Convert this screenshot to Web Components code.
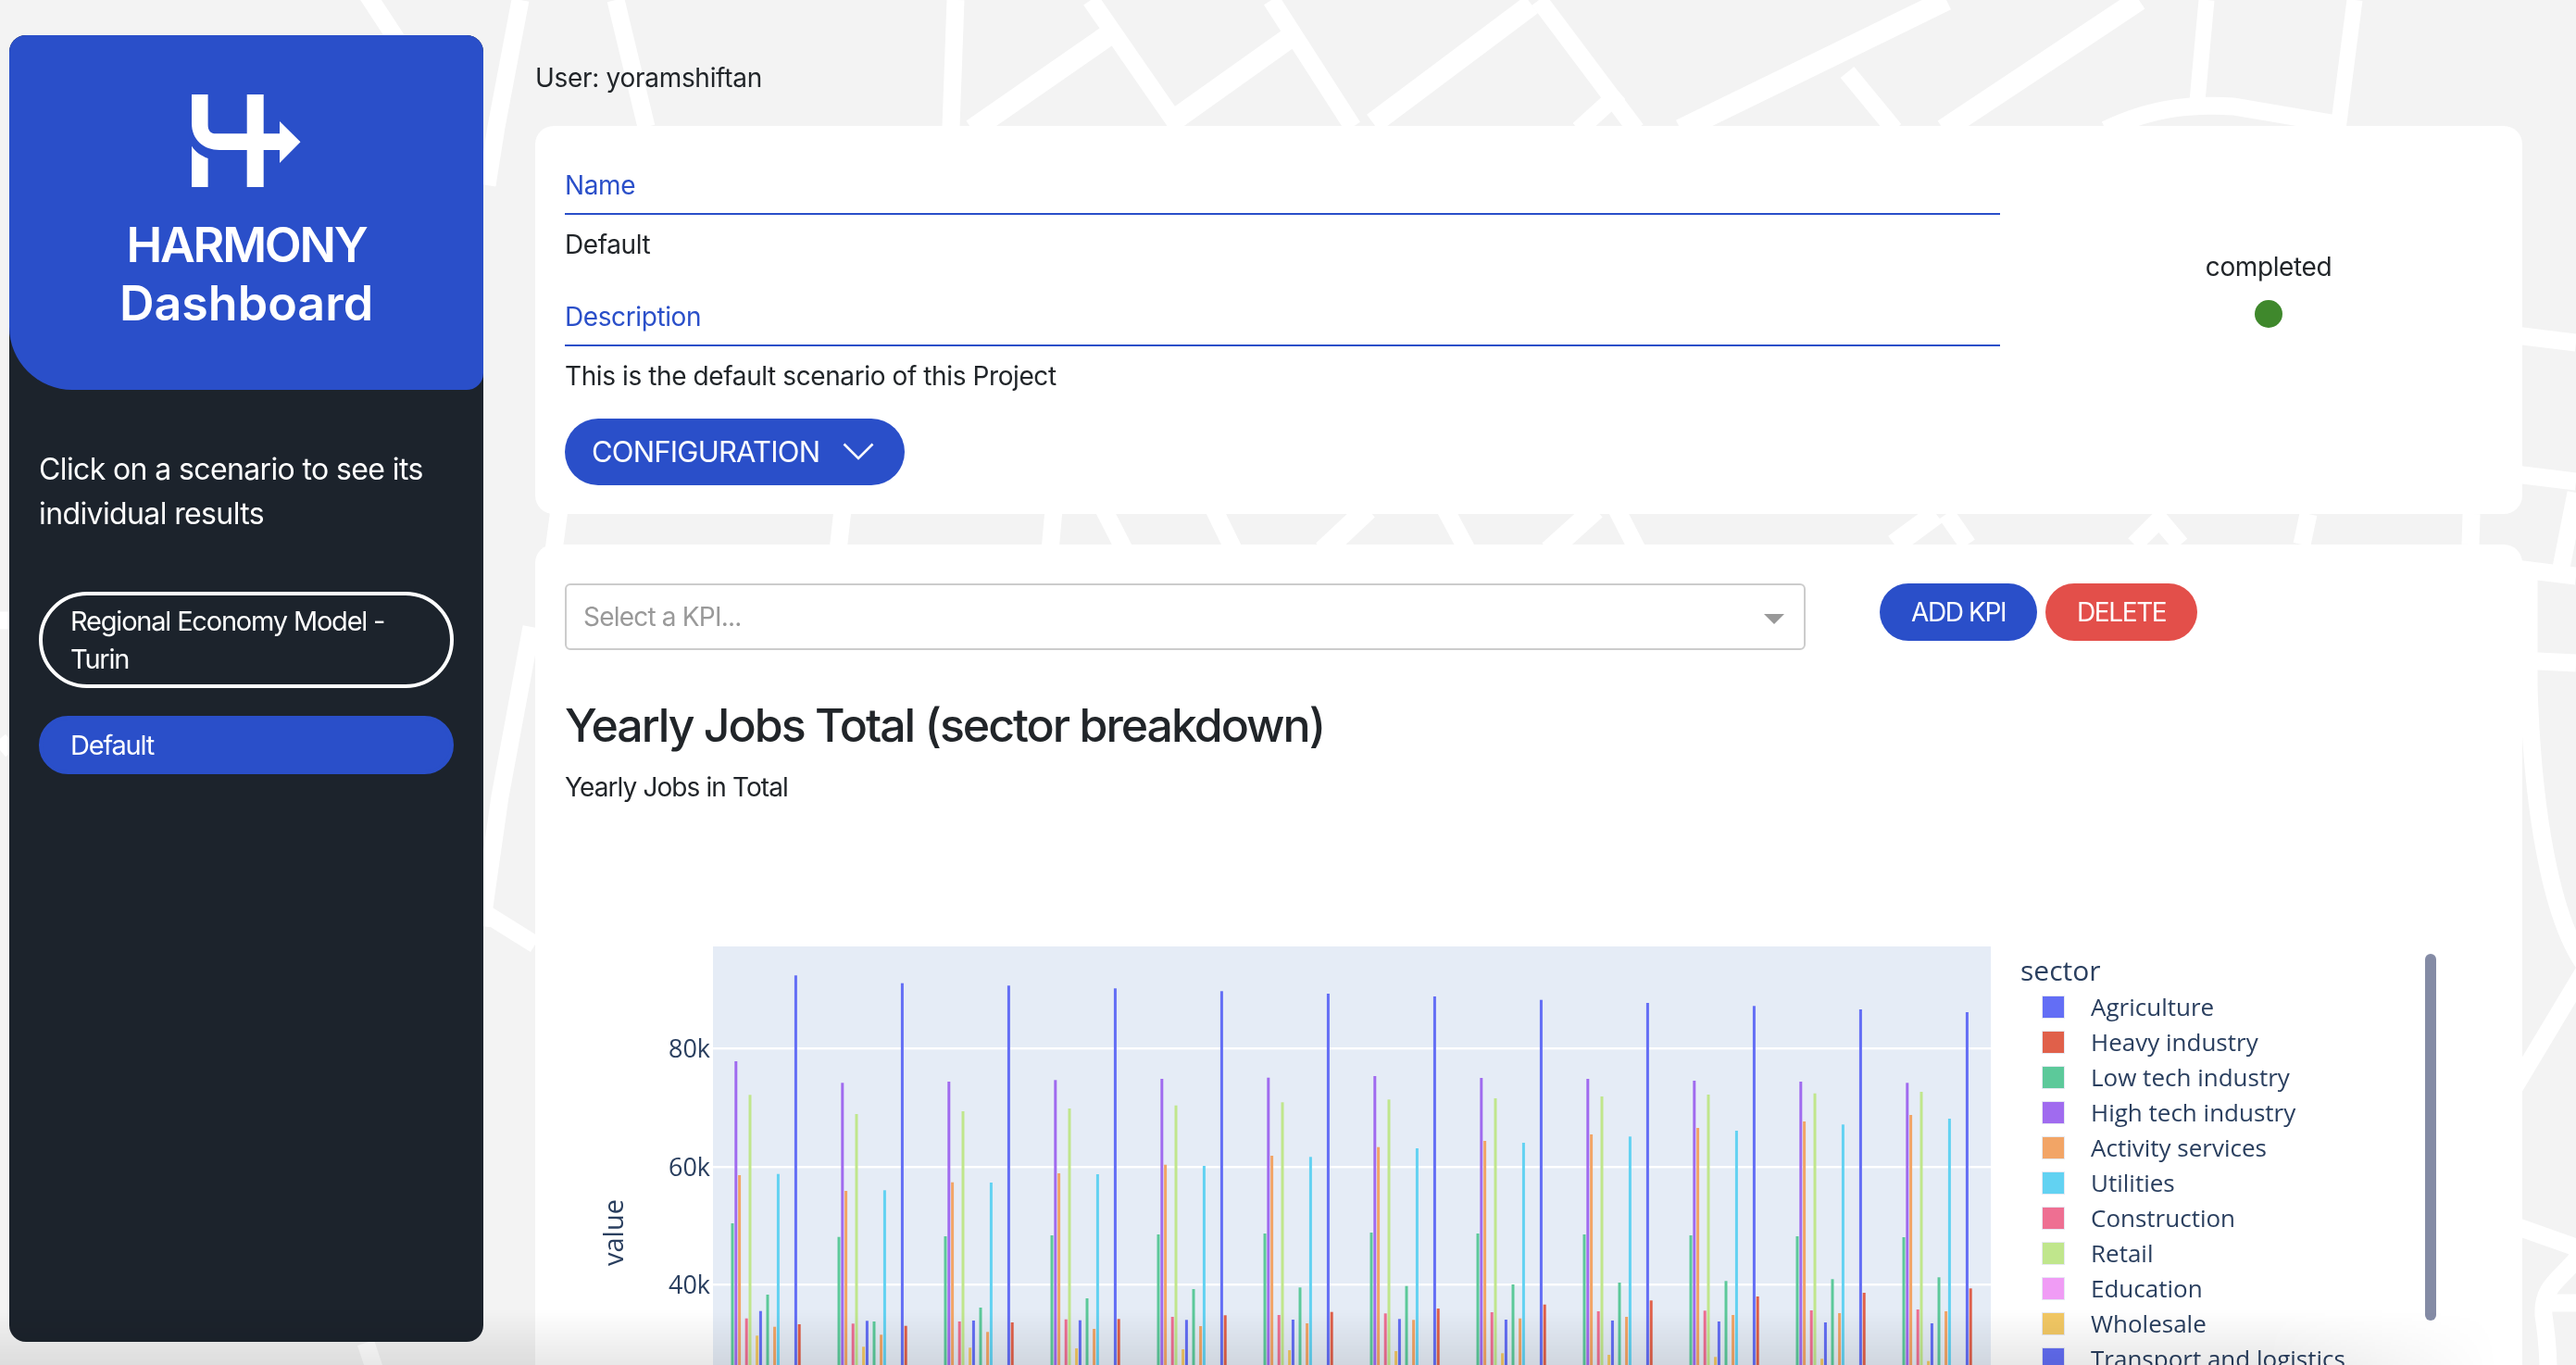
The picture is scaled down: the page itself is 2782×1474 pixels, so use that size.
<!DOCTYPE html>
<html lang="en">
<head>
<meta charset="utf-8">
<title>HARMONY Dashboard</title>
<style>
  html, body { margin: 0; height: 100%; overflow: hidden; background: #f3f3f3; }
  body { font-family: Inter, "Liberation Sans", sans-serif; color: #212529; }
</style>
</head>
<body>
<h-roads></h-roads>
<h-app>
  <h-sidebar slot="sidebar">
    <h-pill outline>Regional Economy Model - Turin</h-pill>
    <h-pill active>Default</h-pill>
  </h-sidebar>
  <h-user>User: yoramshiftan</h-user>
  <h-scenario-card>
    <h-field label="Name">Default</h-field>
    <h-field label="Description">This is the default scenario of this Project</h-field>
    <h-button slot="action" chevron size="large">CONFIGURATION</h-button>
    <h-status slot="status">completed</h-status>
  </h-scenario-card>
  <h-kpi-card>
    <h-select slot="toolbar" placeholder="Select a KPI..."></h-select>
    <h-button slot="toolbar">ADD KPI</h-button>
    <h-button slot="toolbar" danger>DELETE</h-button>
    <h-chart></h-chart>
  </h-kpi-card>
</h-app>
<h-fade></h-fade>

<script>
const BLUE = "#2a4fc9";

class HRoads extends HTMLElement {
  constructor() {
    super();
    this.attachShadow({ mode: "open" });
  }

  connectedCallback() {
    // street map behind the cards, only the parts in the gaps are visible
    const roads = [
      "M394 -10 L430 45", "M562 0 L536 137 L526 200", "M665 0 L698 137", "M1032 0 L1027 137",
      "M1178 0 L1270 133 ", "M1373 0 L1461 137", "M1662 0 L1767 140", "M1749 100 L1705 140",
      "M1995 78 L2046 140", "M2274 140 C2320 118 2360 112 2412 115 L2530 135",
      "M604 550 L598 595", "M910 550 L905 595", "M1138 550 L1134 595", "M1192 550 L1215 595",
      "M1311 550 L1333 595", "M1561 550 L1585 595",
      "M1746 550 L1769 595", "M2102 555 L2125 588", "M2338 555 L2305 588",
      "M2327 555 L2355 588", "M2493 555 L2486 588", "M2669 555 L2668 588",
      "M2700 360 L2782 370", "M2700 510 L2782 520", "M2782 532 L2766 613", "M2700 612 L2782 622",
      "M2700 712 L2782 716", "M2731 610 V740 C2735 880 2756 990 2790 1040",
      "M2700 1200 L2790 1050", "M2700 1318 L2782 1347",
      "M2790 1350 C2770 1380 2745 1385 2747 1420 C2750 1440 2752 1455 2752 1480", "M2750 1407 H2782",
      "M574 677 L540 860 L520 1000", "M522 985 L578 1020", "M0 670 H12", "M0 810 L12 800", "M395 1450 L405 1480"
    ];
    const wide = [
      "M1197 38 L1050 140", "M1391 42 L1263 133", "M1654 5 L1483 133", "M2102 0 L1815 140",
      "M2310 0 L2099 140", "M1477 550 L1429 595", "M1723 550 L1673 595", "M2091 555 L2046 588"
    ];
    const thin = ["M2383 0 L2372 120", "M2543 0 L2525 140"];
    this.shadowRoot.innerHTML = /* html */`
    <style>
      :host { position: fixed; inset: 0; display: block; }
      svg { display: block; width: 100%; height: 100%; }
      path { fill: none; stroke: #fff; stroke-width: 19; }
      .wide { stroke-width: 23; }
      .thin { stroke-width: 17; }
    </style>
    <svg viewBox="0 0 2782 1474" preserveAspectRatio="none">
      ${roads.map((d) => `<path d="${d}"></path>`).join("")}
      ${wide.map((d) => `<path class="wide" d="${d}"></path>`).join("")}
      ${thin.map((d) => `<path class="thin" d="${d}"></path>`).join("")}
    </svg>`;
  }
}

class HApp extends HTMLElement {
  constructor() {
    super();
    this.attachShadow({ mode: "open" });
  }

  connectedCallback() {
    this.shadowRoot.innerHTML = /* html */`
    <style>
      :host { position: relative; display: flex; gap: 56px; height: 100vh; padding: 38px 58px 0 10px; box-sizing: border-box; overflow: hidden; }
      main { flex: 1; min-width: 0; display: flex; flex-direction: column; }
    </style>
    <slot name="sidebar"></slot>
    <main><slot></slot></main>`;
  }
}

class HLogo extends HTMLElement {
  constructor() {
    super();
    this.attachShadow({ mode: "open" });
  }

  connectedCallback() {
    this.shadowRoot.innerHTML = /* html */`
    <style>
      :host { display: block; width: 118px; height: 100px; }
      svg { display: block; }
    </style>
    <svg width="118" height="100" viewBox="0 0 118 100" fill="#fff">
      <path d="M0 0H17.6V33C17.6 39 20.5 42.3 26 42.3H59.7V0H77.7V42.3H95V29L117.5 51.3L95 74V60H77.7V100H59.7V60H30C13 60 0 49 0 31Z"></path>
      <path d="M0 55.7C4 62 10 66 17.6 69V100H0Z"></path>
    </svg>`;
  }
}

class HSidebar extends HTMLElement {
  constructor() {
    super();
    this.attachShadow({ mode: "open" });
  }

  connectedCallback() {
    this.shadowRoot.innerHTML = /* html */`
    <style>
      :host { flex: none; display: flex; flex-direction: column; width: 512px; height: 1411px; background: #1c232c; border-radius: 18px; overflow: hidden; color: #fff; }
      header { height: 383px; box-sizing: border-box; padding-top: 64px; display: flex; flex-direction: column; align-items: center; background: ${BLUE}; border-radius: 0 0 18px 68px; }
      h1 { margin: 31px 0 0; font-size: 52px; line-height: 63px; font-weight: 600; text-align: center; }
      h1 span { display: block; }
      .top { letter-spacing: -2.3px; }
      p { margin: 62px 0 0; padding: 0 32px; font-size: 32px; line-height: 48px; letter-spacing: -0.62px; }
      .list { display: flex; flex-direction: column; gap: 30px; padding: 60px 32px 0; }
    </style>
    <header>
      <h-logo></h-logo>
      <h1><span class="top">HARMONY</span><span>Dashboard</span></h1>
    </header>
    <p>Click on a scenario to see its individual results</p>
    <div class="list"><slot></slot></div>`;
  }
}

class HPill extends HTMLElement {
  constructor() {
    super();
    this.attachShadow({ mode: "open" });
  }

  connectedCallback() {
    this.shadowRoot.innerHTML = /* html */`
    <style>
      :host { display: block; box-sizing: border-box; padding: 7px 30px 7px 30px; border: 4px solid transparent; border-radius: 52px; font-size: 29px; line-height: 41px; letter-spacing: -1.2px; color: #fff; }
      :host([outline]) { border-color: #fff; }
      :host([active]) { background: ${BLUE}; border-color: ${BLUE}; }
    </style>
    <slot></slot>`;
  }
}

class HUser extends HTMLElement {
  constructor() {
    super();
    this.attachShadow({ mode: "open" });
  }

  connectedCallback() {
    this.shadowRoot.innerHTML = /* html */`
    <style>
      :host { flex: none; display: block; height: 98px; padding-top: 26px; box-sizing: border-box; font-size: 28px; line-height: 40px; letter-spacing: -0.3px; }
    </style>
    <slot></slot>`;
  }
}

class HScenarioCard extends HTMLElement {
  constructor() {
    super();
    this.attachShadow({ mode: "open" });
  }

  connectedCallback() {
    this.shadowRoot.innerHTML = /* html */`
    <style>
      :host { flex: none; display: grid; grid-template-columns: 1550px 1fr; height: 419px; box-sizing: border-box; padding: 44px 0 0 32px; background: #fff; border-radius: 20px; }
      .fields { display: flex; flex-direction: column; gap: 37.5px; }
      .action { margin-top: 26px; }
      .side { padding-left: 16px; }
    </style>
    <div>
      <div class="fields"><slot></slot></div>
      <div class="action"><slot name="action"></slot></div>
    </div>
    <div class="side"><slot name="status"></slot></div>`;
  }
}

class HField extends HTMLElement {
  constructor() {
    super();
    this.attachShadow({ mode: "open" });
  }

  connectedCallback() {
    this.shadowRoot.innerHTML = /* html */`
    <style>
      :host { display: block; font-size: 28px; letter-spacing: -0.4px; }
      .label { color: ${BLUE}; line-height: 40px; padding-bottom: 10px; border-bottom: 2.5px solid ${BLUE}; }
      .value { line-height: 40px; padding-top: 12px; }
    </style>
    <div class="label">${this.getAttribute("label")}</div>
    <div class="value"><slot></slot></div>`;
  }
}

class HStatus extends HTMLElement {
  constructor() {
    super();
    this.attachShadow({ mode: "open" });
  }

  connectedCallback() {
    this.shadowRoot.innerHTML = /* html */`
    <style>
      :host { display: flex; flex-direction: column; align-items: center; gap: 16px; padding-top: 88px; font-size: 28px; line-height: 40px; letter-spacing: -0.4px; }
      i { width: 30px; height: 30px; border-radius: 50%; background: #3f882c; }
    </style>
    <slot></slot>
    <i></i>`;
  }
}

class HButton extends HTMLElement {
  constructor() {
    super();
    this.attachShadow({ mode: "open" });
  }

  connectedCallback() {
    const chevron = this.hasAttribute("chevron")
      ? `<svg width="34" height="19" viewBox="0 0 34 19" fill="none" stroke="#fff" stroke-width="2.6"><path d="M1.5 1.5L17 17L32.5 1.5"></path></svg>`
      : "";
    this.shadowRoot.innerHTML = /* html */`
    <style>
      :host { display: inline-flex; align-items: center; gap: 25px; height: 62px; padding: 0 34px; box-sizing: border-box; border-radius: 31px; background: ${BLUE}; color: #fff; font-size: 28px; letter-spacing: -1.4px; white-space: nowrap; }
      :host([danger]) { background: #e34f4a; }
      :host([size="large"]) { height: 72px; border-radius: 36px; padding: 0 33px 0 29px; font-size: 31px; letter-spacing: -0.8px; }
    </style>
    <slot></slot>${chevron}`;
  }
}

class HKpiCard extends HTMLElement {
  constructor() {
    super();
    this.attachShadow({ mode: "open" });
  }

  connectedCallback() {
    this.shadowRoot.innerHTML = /* html */`
    <style>
      :host { flex: none; display: block; margin-top: 33px; height: 1000px; box-sizing: border-box; padding: 42px 32px 0; background: #fff; border-radius: 20px; }
      .toolbar { display: flex; align-items: flex-start; gap: 9px; height: 72px; }
      h2 { margin: 47px 0 0; font-size: 50px; line-height: 68px; font-weight: 500; letter-spacing: -2px; color: #212529; }
      p { margin: 13px 0 0; font-size: 28px; line-height: 40px; letter-spacing: -0.9px; }
    </style>
    <div class="toolbar"><slot name="toolbar"></slot></div>
    <h2>Yearly Jobs Total (sector breakdown)</h2>
    <p>Yearly Jobs in Total</p>
    <slot></slot>`;
  }
}

class HSelect extends HTMLElement {
  constructor() {
    super();
    this.attachShadow({ mode: "open" });
  }

  connectedCallback() {
    this.shadowRoot.innerHTML = /* html */`
    <style>
      :host { flex: none; display: flex; align-items: center; justify-content: space-between; width: 1340px; height: 72px; margin-right: 71px; box-sizing: border-box; padding: 0 21px 0 18px; border: 2px solid #ccc; border-radius: 6px; color: #999; font-size: 28px; letter-spacing: -0.8px; }
      i { width: 0; height: 0; margin-top: 4px; border: 11px solid transparent; border-top-color: #999; border-bottom: 0; }
    </style>
    <span>${this.getAttribute("placeholder")}</span>
    <i></i>`;
  }
}

const SECTORS = [
  ["Agriculture", "#636ef5"],
  ["Heavy industry", "#e0604a"],
  ["Low tech industry", "#5cc99a"],
  ["High tech industry", "#a06bef"],
  ["Activity services", "#f2a566"],
  ["Utilities", "#62d2f2"],
  ["Construction", "#ee6f92"],
  ["Retail", "#c0e68c"],
  ["Education", "#f09cf5"],
  ["Wholesale", "#f2c864"],
  ["Transport and logistics", "#636ef5"]
];

// slot index inside a year group and colour of each visible bar
const BAR_SLOTS = [
  [0, "#5cc99a"], [1, "#a06bef"], [2, "#f2a566"], [4, "#ee6f92"], [5, "#c0e68c"], [7, "#f2c864"],
  [8, "#636ef5"], [10, "#5cc99a"], [12, "#f2a566"], [13, "#62d2f2"], [18, "#636ef5"], [19, "#e0604a"]
];

// top of each bar, in page pixels x3 measured from y=1010
const BAR_TOPS = [
  [933, 408, 777, 1241, 517, 1297, 1217, 1164, 1268, 773, 130, 1260],
  [977, 478, 828, 1258, 579, 1333, 1249, 1251, 1294, 826, 155, 1265],
  [975, 474, 800, 1251, 570, 1336, 1248, 1206, 1285, 801, 163, 1254],
  [972, 469, 771, 1244, 561, 1338, 1247, 1176, 1275, 774, 172, 1243],
  [969, 465, 743, 1236, 551, 1341, 1246, 1146, 1266, 747, 181, 1231],
  [966, 461, 714, 1230, 541, 1344, 1245, 1141, 1257, 718, 189, 1220],
  [963, 456, 686, 1225, 532, 1347, 1243, 1136, 1246, 690, 198, 1209],
  [966, 462, 666, 1221, 528, 1354, 1245, 1131, 1241, 672, 209, 1196],
  [969, 465, 645, 1218, 522, 1359, 1248, 1125, 1236, 652, 219, 1183],
  [972, 471, 624, 1216, 516, 1366, 1251, 1120, 1230, 633, 229, 1170],
  [975, 474, 603, 1215, 512, 1372, 1254, 1114, 1224, 613, 240, 1158],
  [978, 478, 582, 1212, 507, 1379, 1257, 1108, 1218, 594, 249, 1144]
];

class HChart extends HTMLElement {
  constructor() {
    super();
    this.attachShadow({ mode: "open" });
  }

  bars() {
    let out = "";
    BAR_TOPS.forEach((tops, group) => {
      tops.forEach((top, i) => {
        const [slot, color] = BAR_SLOTS[i];
        const x = 179.5 + group * 115 + slot * 3.8;
        const y = 1010 + top / 3 - 1022;
        out += `<rect x="${x.toFixed(1)}" y="${y.toFixed(1)}" width="3" height="${(560 - y).toFixed(1)}" fill="${color}"></rect>`;
      });
    });
    return out;
  }

  connectedCallback() {
    const ticks = [["80k", 110], ["60k", 238], ["40k", 365]];
    this.shadowRoot.innerHTML = /* html */`
    <style>
      :host { display: flex; margin-top: 152px; height: 560px; overflow: hidden; font-family: "Open Sans", sans-serif; color: #2a3f5f; }
      svg { flex: none; display: block; }
      text { font-family: "Open Sans", sans-serif; fill: #2a3f5f; }
      .legend { position: relative; flex: 1; padding-left: 32px; }
      .title { font-size: 30px; line-height: 38px; margin-top: 7px; margin-bottom: 1px; }
      .row { display: flex; align-items: center; height: 38px; font-size: 26px; padding-left: 23px; white-space: nowrap; }
      .row i { width: 23px; height: 23px; margin-right: 28px; border: 1px solid #e6e9f2; }
      .scroll { position: absolute; left: 469px; top: 8px; width: 12px; height: 396px; border-radius: 6px; background: #848ba5; }
    </style>
    <svg width="1540" height="560" viewBox="0 0 1540 560">
      <rect x="160" y="0" width="1380" height="560" fill="#e5ecf6"></rect>
      ${ticks.map(([t, y]) => `<rect x="160" y="${y - 1}" width="1380" height="2.4" fill="#fff"></rect>
      <text x="157" y="${y + 10}" font-size="27" text-anchor="end">${t}</text>`).join("")}
      ${this.bars()}
      <text transform="translate(63 309) rotate(-90)" font-size="29" text-anchor="middle">value</text>
    </svg>
    <div class="legend">
      <div class="title">sector</div>
      ${SECTORS.map(([name, color]) => `<div class="row"><i style="background:${color}"></i>${name}</div>`).join("")}
      <div class="scroll"></div>
    </div>`;
  }
}

class HFade extends HTMLElement {
  constructor() {
    super();
    this.attachShadow({ mode: "open" });
  }

  connectedCallback() {
    this.shadowRoot.innerHTML = /* html */`
    <style>
      :host { position: fixed; left: 0; right: 0; bottom: 0; height: 60px; display: block; pointer-events: none; background: linear-gradient(to bottom, rgba(0,0,0,0), rgba(0,0,0,.09)); -webkit-mask-image: linear-gradient(to right, #000 88%, transparent 97%); }
    </style>`;
  }
}

customElements.define("h-roads", HRoads);
customElements.define("h-app", HApp);
customElements.define("h-logo", HLogo);
customElements.define("h-sidebar", HSidebar);
customElements.define("h-pill", HPill);
customElements.define("h-user", HUser);
customElements.define("h-scenario-card", HScenarioCard);
customElements.define("h-field", HField);
customElements.define("h-status", HStatus);
customElements.define("h-button", HButton);
customElements.define("h-kpi-card", HKpiCard);
customElements.define("h-select", HSelect);
customElements.define("h-chart", HChart);
customElements.define("h-fade", HFade);
</script>
</body>
</html>
